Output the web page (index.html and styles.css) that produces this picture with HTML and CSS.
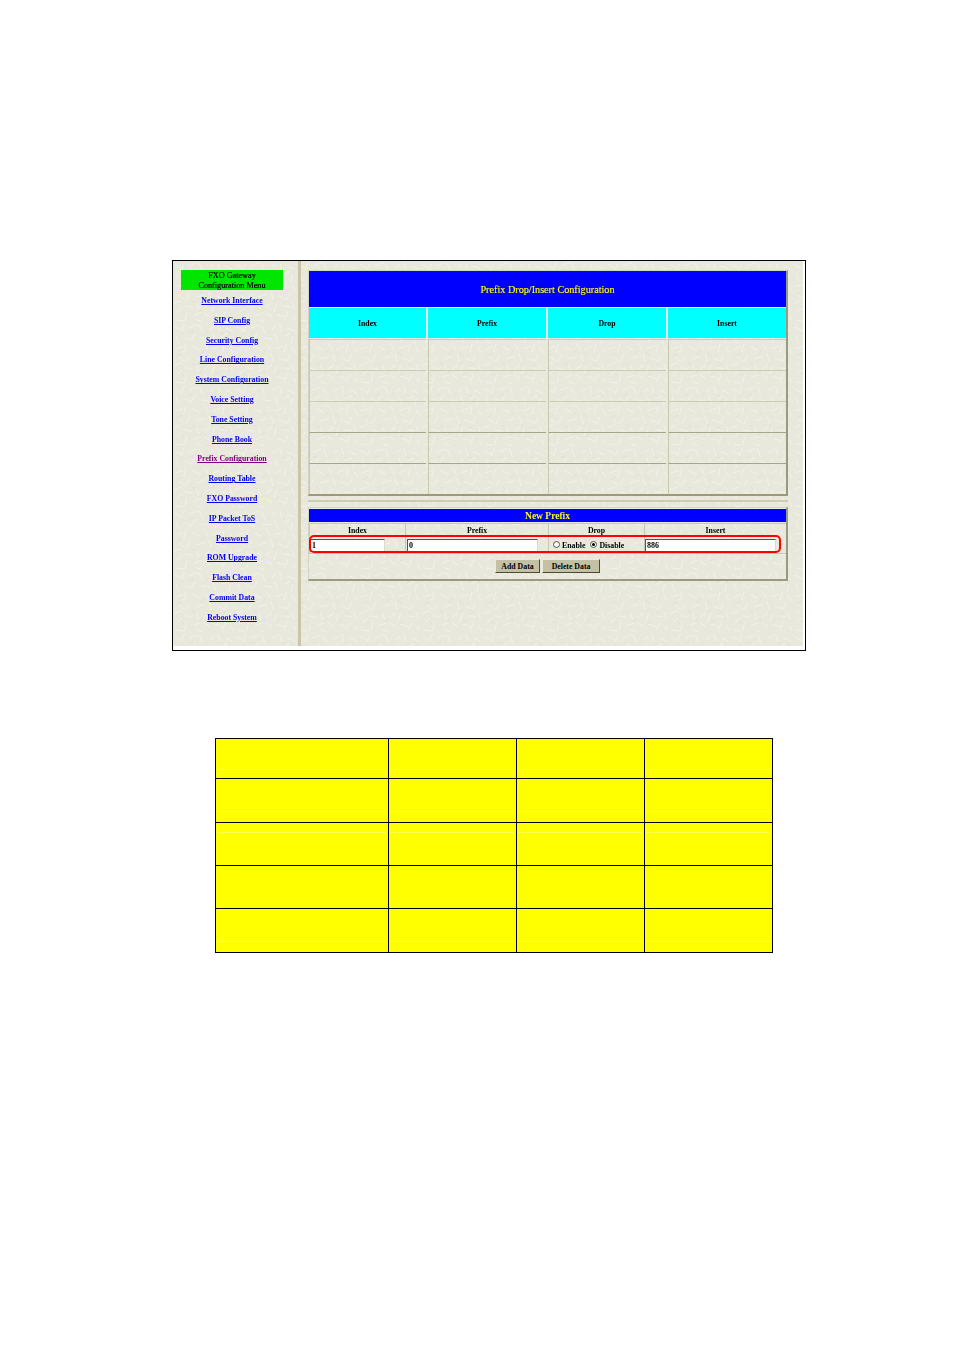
FILE: index.html
```html
<!DOCTYPE html>
<html lang="en">
<head>
  <meta charset="UTF-8">
  <title>Prefix Drop/Insert Configuration</title>
  <link rel="stylesheet" href="styles.css">
</head>
<body>
  <div class="shot">
    <div class="screen">
      <div class="menu">
        <div class="menu-title">FXO Gateway<br>Configuration Menu</div>
        <a href="#">Network Interface</a>
        <a href="#">SIP Config</a>
        <a href="#">Security Config</a>
        <a href="#">Line Configuration</a>
        <a href="#">System Configuration</a>
        <a href="#">Voice Setting</a>
        <a href="#">Tone Setting</a>
        <a href="#">Phone Book</a>
        <a href="#" class="visited">Prefix Configuration</a>
        <a href="#">Routing Table</a>
        <a href="#">FXO Password</a>
        <a href="#">IP Packet ToS</a>
        <a href="#">Password</a>
        <a href="#">ROM Upgrade</a>
        <a href="#">Flash Clean</a>
        <a href="#">Commit Data</a>
        <a href="#">Reboot System</a>
      </div>
      <div class="main">
        <div class="panel list-panel">
          <div class="list-title">Prefix Drop/Insert Configuration</div>
          <div class="list-grid">
            <div class="list-head">Index</div>
            <div class="list-head">Prefix</div>
            <div class="list-head">Drop</div>
            <div class="list-head">Insert</div>
            <div class="list-cell"></div><div class="list-cell"></div><div class="list-cell"></div><div class="list-cell"></div>
            <div class="list-cell"></div><div class="list-cell"></div><div class="list-cell"></div><div class="list-cell"></div>
            <div class="list-cell"></div><div class="list-cell"></div><div class="list-cell"></div><div class="list-cell"></div>
            <div class="list-cell dark"></div><div class="list-cell dark"></div><div class="list-cell dark"></div><div class="list-cell dark"></div>
            <div class="list-cell dark"></div><div class="list-cell dark"></div><div class="list-cell dark"></div><div class="list-cell dark"></div>
          </div>
        </div>
        <div class="rule"></div>
        <div class="panel form-panel">
          <div class="form-title">New Prefix</div>
          <div class="form-grid">
            <div class="form-head">Index</div>
            <div class="form-head">Prefix</div>
            <div class="form-head">Drop</div>
            <div class="form-head">Insert</div>
            <div class="form-cell"><input class="field short" type="text" value="1"></div>
            <div class="form-cell pad"><input class="field" type="text" value="0"></div>
            <div class="form-cell radios">
              <span class="radio"></span><span>Enable</span>
              <span class="radio on"></span><span>Disable</span>
            </div>
            <div class="form-cell"><input class="field" type="text" value="886"></div>
          </div>
          <div class="form-actions">
            <button class="btn add">Add Data</button>
            <button class="btn del">Delete Data</button>
          </div>
          <div class="highlight"></div>
        </div>
      </div>
    </div>
  </div>

  <div class="yellow">
    <div class="y-cell h40 line-a"><i></i></div><div class="y-cell h40 line-a"><i></i></div><div class="y-cell h40 line-a"><i></i></div><div class="y-cell h40 line-a"><i></i></div>
    <div class="y-cell h44 line-b"><i></i></div><div class="y-cell h44 line-b"><i></i></div><div class="y-cell h44 line-b"><i></i></div><div class="y-cell h44 line-b"><i></i></div>
    <div class="y-cell h43 line-t"><i></i></div><div class="y-cell h43 line-t"><i></i></div><div class="y-cell h43 line-t"><i></i></div><div class="y-cell h43 line-t"><i></i></div>
    <div class="y-cell h43"></div><div class="y-cell h43"></div><div class="y-cell h43"></div><div class="y-cell h43"></div>
    <div class="y-cell h44 line-b"><i></i></div><div class="y-cell h44 line-b"><i></i></div><div class="y-cell h44 line-b"><i></i></div><div class="y-cell h44 line-b"><i></i></div>
  </div>
</body>
</html>
```

FILE: styles.css
```css
* {
  box-sizing: border-box;
  margin: 0;
  padding: 0;
}
body {
  background: #fff;
  font-family: "Liberation Serif", "Times New Roman", serif;
  font-size: 7.8px;
  font-weight: bold;
  color: #000;
}

/* screenshot frame */
.shot {
  width: 634px;
  height: 391px;
  margin: 260px 0 0 172px;
  padding: 0 2px 4px 0;
  border: 1px solid #000;
  background: #fff;
}
.screen {
  display: flex;
  height: 100%;
  background-color: #e8e8dc;
  background-size: 62px 62px;
  background-image: url("data:image/svg+xml,%3Csvg xmlns='http://www.w3.org/2000/svg' width='100' height='100'%3E%3Cg stroke='%23f6f6ee' stroke-width='1.1' fill='none'%3E%3Cpath d='M2 6l12 6M18 2l-5 13M26 8l13-5M42 3l6 13M56 12l11-7M72 2l4 14M84 8l12 5M5 20l4 13M16 20l12 7M36 17l-8 12M46 24l13 2M64 18l5 13M78 22l11-5M93 20l-3 13M3 42l13-4M21 34l-4 13M31 38l12 6M50 33l7 10M64 42l13-5M82 34l-2 13M92 40l6 9M9 55l10 7M27 51l-6 12M38 58l13-4M58 50l4 13M70 56l12 5M88 52l-5 11M1 69l12-5M18 72l13 3M37 66l5 13M50 74l11-7M67 69l-4 13M76 72l13 2M92 66l4 12M6 83l8-6M22 84l-3 12M33 88l12-5M50 84l10 6M68 86l12 4M85 82l-5 13M4 95l13 2M38 95l9 3M94 88l4 9'/%3E%3C/g%3E%3Cg stroke='%23dbdbcb' stroke-width='0.9' fill='none'%3E%3Cpath d='M12 15l7 6M33 14l-8 3M53 17l6-8M75 14l7 5M90 14l4 7M14 49l-7 4M44 50l7-6M62 47l7 6M30 65l8 3M60 67l7-5M84 65l-6 6M12 80l6 6M42 82l6-5M72 80l-6 4'/%3E%3C/g%3E%3C/svg%3E");
}

/* left menu */
.menu {
  flex: none;
  width: 128px;
  padding: 9px 15px 0 8px;
  border-right: 3px solid #c9c5ab;
  display: flex;
  flex-direction: column;
  align-items: center;
  filter: blur(0.25px);
}
.menu-title {
  width: 102px;
  height: 20px;
  margin-bottom: 1px;
  padding-top: 1px;
  background: #00e600;
  text-align: center;
  font-size: 8.2px;
  font-weight: normal;
  -webkit-text-stroke: 0.2px #000;
  line-height: 10px;
}
.menu a {
  display: block;
  flex: none;
  height: 19.8px;
  line-height: 19.8px;
  color: #0000ee;
  text-decoration: underline;
  white-space: nowrap;
}
.menu a.visited {
  color: #800080;
}

/* right side */
.main {
  flex: 1;
  padding: 9px 0 0 7px;
  display: flex;
  flex-direction: column;
  filter: blur(0.25px);
}
.panel {
  position: relative;
  width: 480px;
  border-top: 1px solid #d6d4c0;
  border-left: 1px solid #d6d4c0;
  border-right: 2px solid #9c9a7c;
  border-bottom: 2px solid #9c9a7c;
}
.list-panel {
  height: 226px;
}
.list-title {
  height: 36px;
  line-height: 37px;
  background: #0000ff;
  color: #ffff00;
  text-align: center;
  font-size: 10.2px;
  font-weight: normal;
  -webkit-text-stroke: 0.15px #ffff00;
  margin-bottom: 1px;
}
.list-grid {
  display: grid;
  grid-template-columns: 117px 118px 118px 118px;
  column-gap: 2px;
}
.list-head {
  height: 30px;
  line-height: 32px;
  margin-bottom: 1px;
  background: #00ffff;
  text-align: center;
}
.list-cell {
  height: 31px;
  border-top: 1px solid #cdcbb4;
  border-left: 1px solid #c9c7ae;
}
.list-cell.dark {
  border-top-color: #a8a688;
}
.rule {
  height: 2px;
  width: 480px;
  margin: 4px 0 5px;
  background: #cfccb4;
}
.form-panel {
  height: 74px;
  padding-top: 1px;
}
.form-title {
  height: 13px;
  line-height: 15px;
  background: #0000ff;
  color: #ffff00;
  text-align: center;
  font-size: 9.5px;
  margin-bottom: 1px;
}
.form-grid {
  display: grid;
  grid-template-columns: 96px 143px 96px 142px;
  grid-template-rows: 13px 18px;
}
.form-head {
  line-height: 13px;
  text-align: center;
  border-top: 1px solid #c9c7ae;
  border-left: 1px solid #c9c7ae;
}
.form-cell {
  padding-top: 3px;
  border-left: 1px solid #c9c7ae;
  border-bottom: 1px solid #c9c7ae;
}
.form-cell.pad {
  padding-left: 1px;
}
.field {
  display: block;
  width: 131px;
  height: 13px;
  padding-left: 1px;
  border: 1px solid;
  border-color: #55553f #dcdac8 #dcdac8 #55553f;
  background: #fff;
  font-family: inherit;
  font-size: 8px;
  font-weight: bold;
  line-height: 11px;
}
.field.short {
  width: 75px;
}
.radios {
  display: flex;
  align-items: center;
  padding: 2px 0 0 4px;
  gap: 2px;
}
.radio {
  position: relative;
  width: 7px;
  height: 7px;
  margin-top: -2px;
  border: 1px solid #55553f;
  border-radius: 50%;
  background: #fff;
}
.radio.on {
  margin-left: 3px;
}
.radio.on::after {
  content: "";
  position: absolute;
  left: 1px;
  top: 1px;
  width: 3px;
  height: 3px;
  border-radius: 50%;
  background: #000;
}
.form-actions {
  display: flex;
  justify-content: center;
  gap: 2px;
  padding-top: 5px;
}
.btn {
  height: 14px;
  border: 1px solid;
  border-color: #eceadc #4a4a36 #4a4a36 #eceadc;
  background: #c4c0a4;
  font-family: inherit;
  font-size: 7.8px;
  font-weight: bold;
}
.btn.add {
  width: 45px;
}
.btn.del {
  width: 58px;
}
.highlight {
  position: absolute;
  left: 0;
  top: 27px;
  width: 472px;
  height: 18px;
  border: 2px solid #f00;
  border-radius: 5px;
}

/* yellow table */
.yellow {
  display: grid;
  grid-template-columns: 173px 128px 128px 128px;
  width: 558px;
  margin: 87px 0 0 215px;
  border-top: 1px solid #000;
  border-left: 1px solid #000;
}
.y-cell {
  position: relative;
  background: #ffff00;
  border-right: 1px solid #000;
  border-bottom: 1px solid #000;
}
.h40 { height: 40px; }
.h44 { height: 44px; }
.h43 { height: 43px; }
.y-cell i {
  position: absolute;
  left: 2px;
  right: 2px;
  height: 1px;
  background: #ffff55;
}
.line-a i { bottom: 8px; }
.line-b i { bottom: 10px; }
.line-t i { top: 9px; }
```
